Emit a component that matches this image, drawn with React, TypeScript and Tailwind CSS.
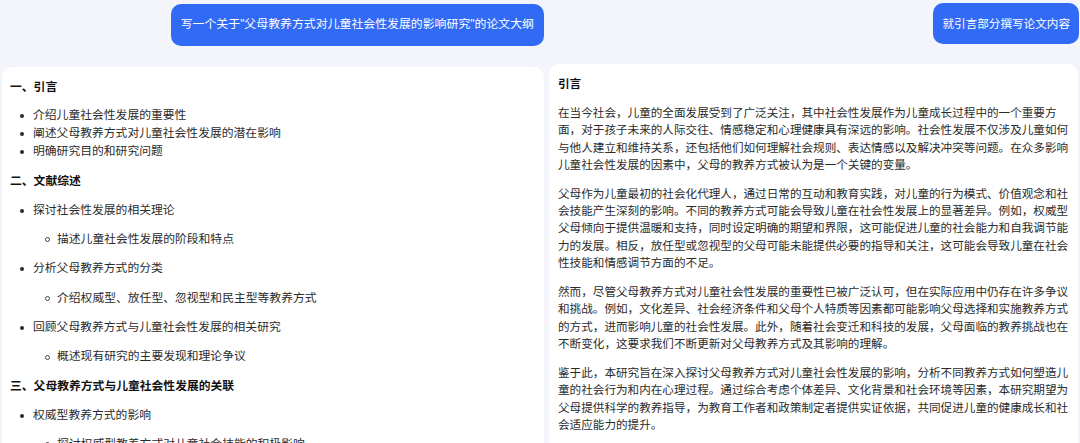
import React from 'react';

const FONT = "font-['Liberation_Sans','Noto_Sans_CJK_SC',sans-serif]";

// Outline shown on the left card
const Bullet: React.FC<{ text: string; className?: string }> = ({ text, className = '' }) => (
  <div className={`flex items-center h-[18px] ${className}`}>
    <span className="flex w-[23px] flex-shrink-0 justify-end pr-[9px]">
      <span className="block h-[4px] w-[4px] rounded-full bg-[#2b2b2b]" />
    </span>
    <span className="whitespace-nowrap">{text}</span>
  </div>
);

const SubBullet: React.FC<{ text: string; className?: string }> = ({ text, className = '' }) => (
  <div className={`flex items-center h-[18px] pl-[23px] ${className}`}>
    <span className="flex w-[24px] flex-shrink-0 justify-end pr-[7px]">
      <span className="block h-[5px] w-[5px] rounded-full border border-[#444]" />
    </span>
    <span className="whitespace-nowrap">{text}</span>
  </div>
);

const Heading: React.FC<{ text: string; className?: string }> = ({ text, className = '' }) => (
  <div className={`h-[18px] leading-[18px] font-bold text-[#111] ${className}`}>{text}</div>
);

// Latin quotes stay narrow, as in the screenshot
const Q: React.FC<{ children: React.ReactNode }> = ({ children }) => (
  <span className="font-['Liberation_Sans',sans-serif]">{children}</span>
);

const paragraphs = [
  '在当今社会，儿童的全面发展受到了广泛关注，其中社会性发展作为儿童成长过程中的一个重要方面，对于孩子未来的人际交往、情感稳定和心理健康具有深远的影响。社会性发展不仅涉及儿童如何与他人建立和维持关系，还包括他们如何理解社会规则、表达情感以及解决冲突等问题。在众多影响儿童社会性发展的因素中，父母的教养方式被认为是一个关键的变量。',
  '父母作为儿童最初的社会化代理人，通过日常的互动和教育实践，对儿童的行为模式、价值观念和社会技能产生深刻的影响。不同的教养方式可能会导致儿童在社会性发展上的显著差异。例如，权威型父母倾向于提供温暖和支持，同时设定明确的期望和界限，这可能促进儿童的社会能力和自我调节能力的发展。相反，放任型或忽视型的父母可能未能提供必要的指导和关注，这可能会导致儿童在社会性技能和情感调节方面的不足。',
  '然而，尽管父母教养方式对儿童社会性发展的重要性已被广泛认可，但在实际应用中仍存在许多争议和挑战。例如，文化差异、社会经济条件和父母个人特质等因素都可能影响父母选择和实施教养方式的方式，进而影响儿童的社会性发展。此外，随着社会变迁和科技的发展，父母面临的教养挑战也在不断变化，这要求我们不断更新对父母教养方式及其影响的理解。',
  '鉴于此，本研究旨在深入探讨父母教养方式对儿童社会性发展的影响，分析不同教养方式如何塑造儿童的社会行为和内在心理过程。通过综合考虑个体差异、文化背景和社会环境等因素，本研究期望为父母提供科学的教养指导，为教育工作者和政策制定者提供实证依据，共同促进儿童的健康成长和社会适应能力的提升。',
];

export default function App() {
  return (
    <div className={`flex h-[443px] w-[1080px] overflow-hidden bg-[#f3f5fb] ${FONT}`}>
      {/* Left: outline request + answer */}
      <div className="ml-[2px] flex w-[542px] flex-col">
        <div className="flex justify-end pt-[4px]">
          <div className="flex h-[42px] items-center rounded-[10px] bg-[#316bf5] px-[10px] text-[11.9px] text-white whitespace-nowrap">
            写一个关于<Q>"</Q>父母教养方式对儿童社会性发展的影响研究<Q>"</Q>的论文大纲
          </div>
        </div>
        <div className="mt-[21px] flex-1 rounded-t-[10px] bg-white px-[8px] pt-[11px] text-[11.8px] text-[#2b2b2b]">
          <Heading text="一、引言" />
          <div className="mt-[11px]">
            <Bullet text="介绍儿童社会性发展的重要性" />
            <Bullet text="阐述父母教养方式对儿童社会性发展的潜在影响" />
            <Bullet text="明确研究目的和研究问题" />
          </div>
          <Heading text="二、文献综述" className="mt-[11.3px]" />
          <Bullet text="探讨社会性发展的相关理论" className="mt-[11.3px]" />
          <SubBullet text="描述儿童社会性发展的阶段和特点" className="mt-[11.3px]" />
          <Bullet text="分析父母教养方式的分类" className="mt-[11.3px]" />
          <SubBullet text="介绍权威型、放任型、忽视型和民主型等教养方式" className="mt-[11.3px]" />
          <Bullet text="回顾父母教养方式与儿童社会性发展的相关研究" className="mt-[11.3px]" />
          <SubBullet text="概述现有研究的主要发现和理论争议" className="mt-[11.3px]" />
          <Heading text="三、父母教养方式与儿童社会性发展的关联" className="mt-[11.3px]" />
          <Bullet text="权威型教养方式的影响" className="mt-[11.3px]" />
          <SubBullet text="探讨权威型教养方式对儿童社会技能的积极影响" className="mt-[11.3px]" />
        </div>
      </div>

      {/* Right: introduction request + answer */}
      <div className="ml-[5px] flex w-[530px] flex-col">
        <div className="flex justify-end pt-[3px]">
          <div className="flex h-[41px] items-center rounded-[10px] bg-[#316bf5] px-[9px] text-[11.6px] text-white whitespace-nowrap">
            就引言部分撰写论文内容
          </div>
        </div>
        <div className="mr-[1px] mt-[20px] flex-1 rounded-t-[10px] bg-white pl-[9px] pr-[7px] pt-[11px] text-[11.6px] text-[#2b2b2b]">
          <div className="mb-[12px] h-[17px] leading-[17px] font-bold text-[#111]">引言</div>
          {paragraphs.map((p, i) => (
            <p key={i} className={`leading-[17.3px] ${i > 0 ? 'mt-[11.7px]' : ''}`}>
              {p}
            </p>
          ))}
        </div>
      </div>
    </div>
  );
}
